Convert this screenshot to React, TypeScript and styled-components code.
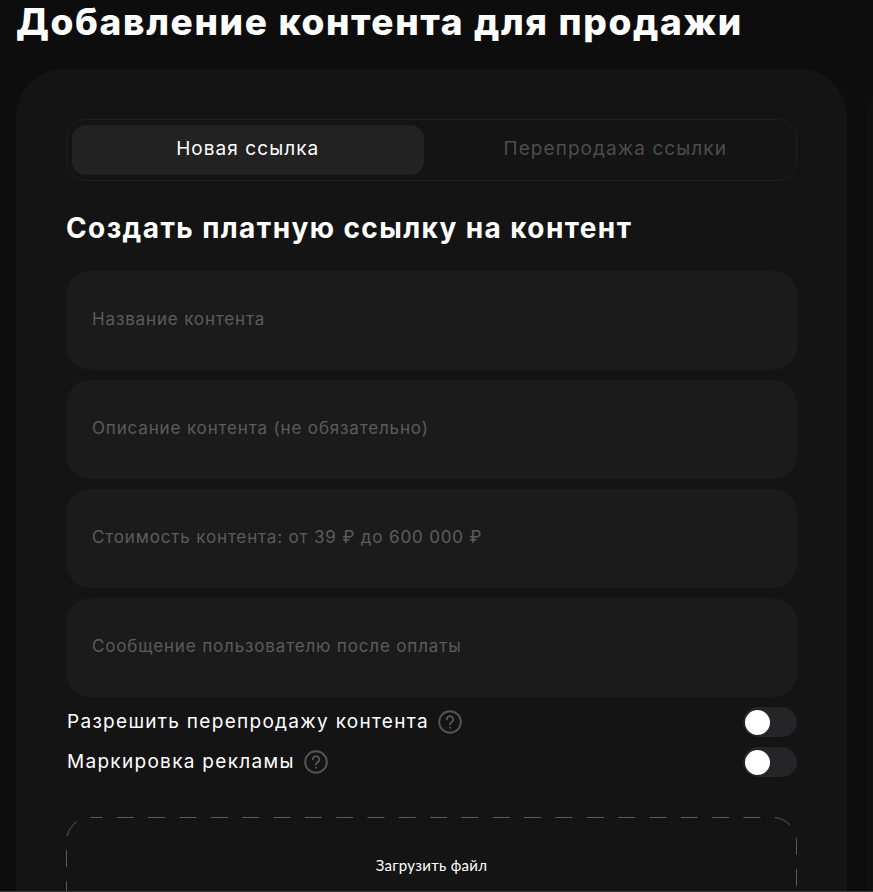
import React from 'react';
import styled, { createGlobalStyle } from 'styled-components';

const GlobalStyle = createGlobalStyle`
    html, body {
        margin: 0;
        height: 100%;
        background: #0d0d0d;
        overflow: hidden;
    }
    * { box-sizing: border-box; }
`;

const Page = styled.div`
    height: 892px;
    padding-left: 16px;
    overflow: hidden;
    border-bottom: 1px solid #3a3a3a;
    font-family: 'Inter', 'Liberation Sans', sans-serif;
    color: #fff;
`;

const PageTitle = styled.h1`
    margin: 0;
    height: 69px;
    font-size: 37px;
    line-height: 44px;
    font-weight: 800;
    letter-spacing: 1.65px;
    white-space: nowrap;
`;

const Columns = styled.div`
    display: flex;
    gap: 20px;
    width: 1400px;
`;

const Card = styled.section`
    width: 831px;
    height: 900px;
    padding: 50px;
    background: #141414;
    border-radius: 48px;
    flex-shrink: 0;
`;

const SideCard = styled(Card)`
    background: #101010;
`;

const Tabs = styled.div`
    display: grid;
    grid-template-columns: 1fr 1fr;
    gap: 16px;
    height: 62px;
    padding: 5px;
    border: 1px solid #1f1f1f;
    border-radius: 20px;
`;

const Tab = styled.div<{ $active?: boolean }>`
    display: flex;
    align-items: center;
    justify-content: center;
    padding-bottom: 4px;
    border-radius: 14px;
    font-size: 19px;
    letter-spacing: 1.07px;
    background: ${p => (p.$active ? '#222222' : 'transparent')};
    color: ${p => (p.$active ? '#ffffff' : '#4d4d4d')};
`;

const FormTitle = styled.h2`
    margin: 30px 0 26px;
    font-size: 28px;
    line-height: 34px;
    font-weight: 700;
    letter-spacing: 1.4px;
    white-space: nowrap;
`;

const Fields = styled.div`
    display: flex;
    flex-direction: column;
    gap: 10px;
`;

const Field = styled.input`
    display: block;
    width: 100%;
    height: 99px;
    padding: 0 26px 3px;
    border: 0;
    outline: 0;
    border-radius: 24px;
    background: #1b1b1b;
    color: #fff;
    font-family: inherit;
    font-size: 17px;
    letter-spacing: 0.85px;

    &::placeholder {
        color: #5c5c5c;
        opacity: 1;
    }
`;

const Options = styled.div`
    display: flex;
    flex-direction: column;
    gap: 10px;
    margin-top: 10px;
`;

const OptionRow = styled.div`
    display: flex;
    align-items: center;
    justify-content: space-between;
    height: 30px;
`;

const OptionLabel = styled.div`
    display: flex;
    align-items: center;
    gap: 9px;
    padding-left: 1px;
    font-size: 19px;
    letter-spacing: 1.3px;
`;

const OptionText = styled.span`
    padding-bottom: 2px;
`;

const Toggle = styled.div`
    display: flex;
    align-items: center;
    width: 54px;
    height: 30px;
    padding: 0 2px;
    border-radius: 15px;
    background: #252527;
`;

const Knob = styled.span`
    width: 25px;
    height: 25px;
    border-radius: 50%;
    background: #fff;
`;

const Upload = styled.div`
    position: relative;
    display: flex;
    justify-content: center;
    height: 120px;
    margin-top: 40px;
    padding-top: 39px;
    font-family: 'Lato', sans-serif;
    font-size: 15px;
    line-height: 18px;
    letter-spacing: 0.3px;
`;

const DashedFrame = styled.svg`
    position: absolute;
    top: 0;
    left: 0;
`;

const HelpIcon = () => (
    <svg width="24" height="24" viewBox="0 0 24 24" fill="none" stroke="#555555" strokeWidth="1.9" strokeLinecap="round">
        <circle cx="12" cy="12" r="10.8" />
        <path d="M8.8 9.4a3.2 3.2 0 1 1 4.9 2.7c-1.1.7-1.7 1.3-1.7 2.5" />
        <path d="M12 17.6v.1" />
    </svg>
);

const options = ['Разрешить перепродажу контента', 'Маркировка рекламы'];
const fields = [
    'Название контента',
    'Описание контента (не обязательно)',
    'Стоимость контента: от 39 ₽ до 600 000 ₽',
    'Сообщение пользователю после оплаты',
];

export default function App() {
    return (
        <Page>
            <GlobalStyle />
            <PageTitle>Добавление контента для продажи</PageTitle>
            <Columns>
                <Card>
                    <Tabs>
                        <Tab $active>Новая ссылка</Tab>
                        <Tab>Перепродажа ссылки</Tab>
                    </Tabs>
                    <FormTitle>Создать платную ссылку на контент</FormTitle>
                    <Fields>
                        {fields.map(text => (
                            <Field key={text} placeholder={text} readOnly />
                        ))}
                    </Fields>
                    <Options>
                        {options.map(text => (
                            <OptionRow key={text}>
                                <OptionLabel>
                                    <OptionText>{text}</OptionText>
                                    <HelpIcon />
                                </OptionLabel>
                                <Toggle>
                                    <Knob />
                                </Toggle>
                            </OptionRow>
                        ))}
                    </Options>
                    <Upload>
                        <DashedFrame width="731" height="120" fill="none">
                            <rect
                                x="0.5"
                                y="0.5"
                                width="730"
                                height="119"
                                rx="24"
                                stroke="#5a5a5a"
                                strokeDasharray="17 14.33"
                                strokeDashoffset="5"
                            />
                        </DashedFrame>
                        Загрузить файл
                    </Upload>
                </Card>
                <SideCard />
            </Columns>
        </Page>
    );
}
